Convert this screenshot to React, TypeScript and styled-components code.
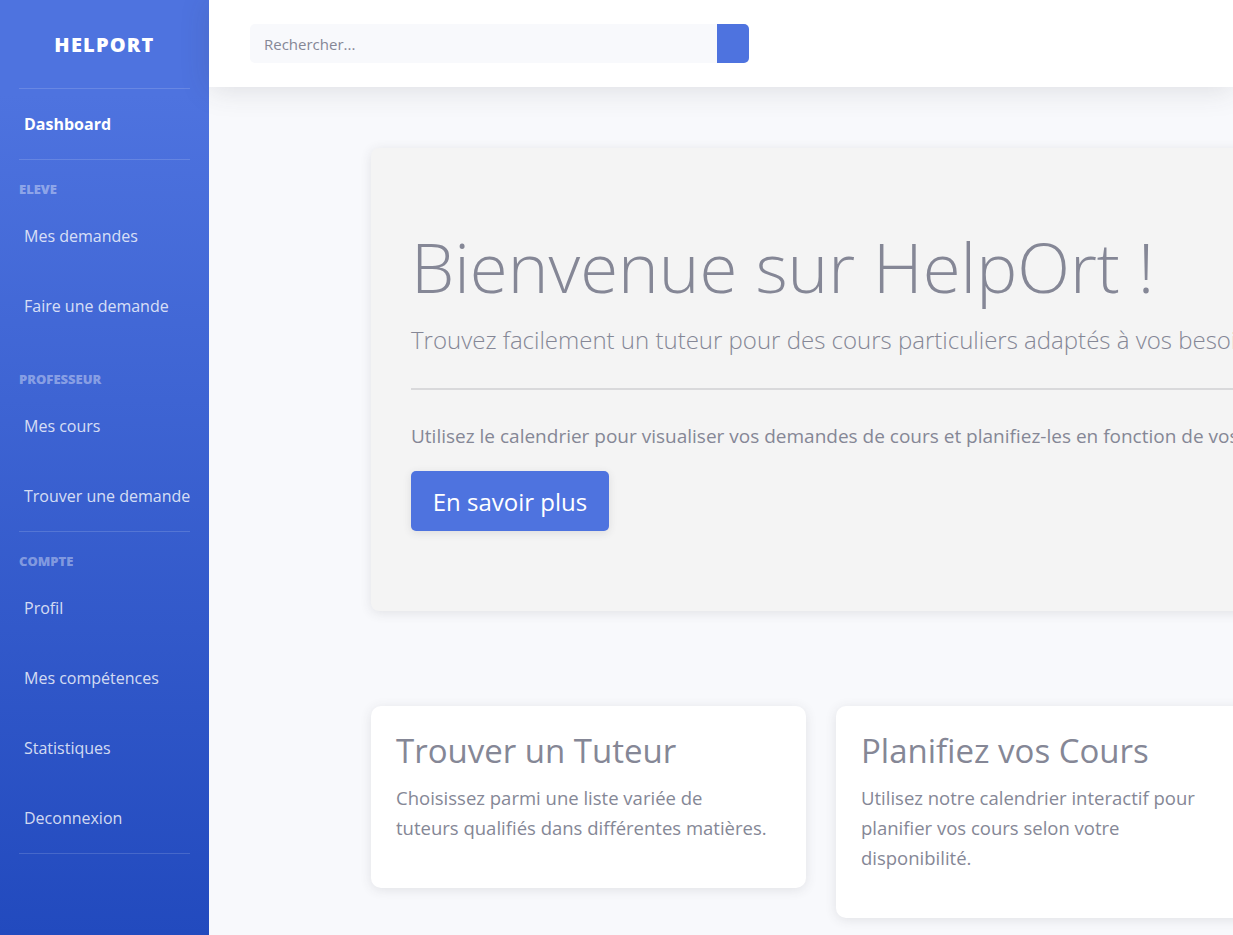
import React from "react";
import styled, { createGlobalStyle } from "styled-components";

const GlobalStyle = createGlobalStyle`
  html, body { margin: 0; padding: 0; }
  body {
    font-family: "Open Sans", "Noto Sans", "Liberation Sans", sans-serif;
    background: #f8f9fc;
    overflow: hidden;
  }
  * { box-sizing: border-box; }
`;

const Wrapper = styled.div`
  display: flex;
  width: 1233px;
  height: 935px;
  overflow: hidden;
`;

const Sidebar = styled.nav`
  width: 209px;
  flex-shrink: 0;
  display: flex;
  flex-direction: column;
  background-color: #4e73df;
  background-image: linear-gradient(180deg, #4e73df 10%, #224abe 100%);
`;

const Brand = styled.div`
  height: 88px;
  display: flex;
  align-items: center;
  justify-content: center;
  color: #fff;
  font-size: 20px;
  font-weight: 800;
  letter-spacing: 1.2px;
`;

const Divider = styled.hr`
  margin: 0 19px;
  border: 0;
  height: 1px;
  background: rgba(255, 255, 255, 0.15);
`;

const SideHeading = styled.div<{ $spaced?: boolean }>`
  padding: ${(p) => (p.$spaced ? "31px" : "22px")} 19px 5px;
  font-size: 13px;
  line-height: 14px;
  font-weight: 800;
  text-transform: uppercase;
  color: rgba(255, 255, 255, 0.4);
`;

const NavLink = styled.a<{ $active?: boolean }>`
  height: 70px;
  display: flex;
  align-items: center;
  padding: 0 24px;
  font-size: 16px;
  text-decoration: none;
  color: ${(p) => (p.$active ? "#fff" : "rgba(255, 255, 255, 0.8)")};
  font-weight: ${(p) => (p.$active ? 700 : 400)};
  white-space: nowrap;
`;

const Content = styled.div`
  flex: 1;
  min-width: 0;
  display: flex;
  flex-direction: column;
`;

const Topbar = styled.header`
  height: 87px;
  flex-shrink: 0;
  background: #fff;
  display: flex;
  align-items: center;
  padding-left: 41px;
  box-shadow: 0 2px 28px 0 rgba(58, 59, 69, 0.15);
  position: relative;
  z-index: 1;
`;

const SearchGroup = styled.form`
  display: flex;
  width: 499px;
  height: 39px;
`;

const SearchInput = styled.input`
  flex: 1;
  height: 100%;
  border: 0;
  border-radius: 5px 0 0 5px;
  background: #f8f9fc;
  padding: 0 14px;
  font-family: inherit;
  font-size: 15px;
  color: #6e707e;
  outline: none;
  &::placeholder { color: #858796; }
`;

const SearchButton = styled.button`
  width: 32px;
  height: 100%;
  border: 0;
  border-radius: 0 5px 5px 0;
  background: #4e73df;
`;

const Main = styled.main`
  flex: 1;
  overflow: hidden;
  padding: 61px 0 0 162px;
`;

const Container = styled.div`
  width: 1365px;
  display: flex;
  flex-direction: column;
`;

const Jumbotron = styled.section`
  background: #f4f4f4;
  border-radius: 8px;
  padding: 76px 40px 80px;
  box-shadow: 0 2px 12px 0 rgba(58, 59, 69, 0.12);
  color: #858796;
  display: flex;
  flex-direction: column;
`;

const Display = styled.h1`
  margin: 0;
  font-size: 69px;
  line-height: 84px;
  font-weight: 300;
  color: #858796;
  white-space: nowrap;
`;

const Lead = styled.p`
  margin: 15px 0 0;
  font-size: 24px;
  line-height: 33px;
  font-weight: 300;
  white-space: nowrap;
`;

const Rule = styled.hr`
  margin: 32px 0 0;
  border: 0;
  height: 2px;
  background: #d9d9db;
`;

const Text = styled.p`
  margin: 33px 0 0;
  font-size: 19px;
  line-height: 27px;
  white-space: nowrap;
`;

const PrimaryButton = styled.a`
  margin-top: 21px;
  align-self: flex-start;
  display: inline-flex;
  align-items: center;
  justify-content: center;
  width: 198px;
  height: 60px;
  border-radius: 5px;
  background: #4e73df;
  color: #fff;
  font-size: 24px;
  text-decoration: none;
  box-shadow: 0 2px 8px rgba(58, 59, 69, 0.12);
`;

const CardRow = styled.div`
  margin-top: 95px;
  display: flex;
  gap: 30px;
  align-items: flex-start;
`;

const Card = styled.article`
  width: 435px;
  background: #fff;
  border-radius: 10px;
  padding: 26px 25px 45px;
  box-shadow: 0 2px 12px 0 rgba(58, 59, 69, 0.12);
  color: #858796;
`;

const CardTitle = styled.h3`
  margin: 0;
  font-size: 33px;
  line-height: 38px;
  font-weight: 400;
`;

const CardText = styled.p`
  margin: 13px 0 0;
  font-size: 18.5px;
  line-height: 30px;
`;

const sections = [
  { title: "Eleve", links: ["Mes demandes", "Faire une demande"], divider: false },
  { title: "Professeur", links: ["Mes cours", "Trouver une demande"], divider: true },
  { title: "Compte", links: ["Profil", "Mes compétences", "Statistiques", "Deconnexion"], divider: true },
];

const cards = [
  {
    title: "Trouver un Tuteur",
    lines: ["Choisissez parmi une liste variée de", "tuteurs qualifiés dans différentes matières."],
  },
  {
    title: "Planifiez vos Cours",
    lines: ["Utilisez notre calendrier interactif pour", "planifier vos cours selon votre", "disponibilité."],
  },
];

export default function App() {
  return (
    <>
      <GlobalStyle />
      <Wrapper>
        <Sidebar>
          <Brand>HELPORT</Brand>
          <Divider />
          <NavLink $active>Dashboard</NavLink>
          <Divider />
          {sections.map((s, i) => {
            const prev = sections[i - 1];
            return (
              <React.Fragment key={s.title}>
                <SideHeading $spaced={i > 0 && !prev.divider}>{s.title}</SideHeading>
                {s.links.map((l) => (
                  <NavLink key={l}>{l}</NavLink>
                ))}
                {s.divider && <Divider />}
              </React.Fragment>
            );
          })}
        </Sidebar>
        <Content>
          <Topbar>
            <SearchGroup onSubmit={(e) => e.preventDefault()}>
              <SearchInput placeholder="Rechercher..." />
              <SearchButton type="submit" aria-label="Rechercher" />
            </SearchGroup>
          </Topbar>
          <Main>
            <Container>
              <Jumbotron>
                <Display>Bienvenue sur HelpOrt !</Display>
                <Lead>
                  Trouvez facilement un tuteur pour des cours particuliers adaptés à vos besoins.
                </Lead>
                <Rule />
                <Text>
                  Utilisez le calendrier pour visualiser vos demandes de cours et planifiez-les en fonction de vos disponibilités.
                </Text>
                <PrimaryButton href="#">En savoir plus</PrimaryButton>
              </Jumbotron>
              <CardRow>
                {cards.map((c) => (
                  <Card key={c.title}>
                    <CardTitle>{c.title}</CardTitle>
                    <CardText>
                      {c.lines.map((l, i) => (
                        <React.Fragment key={i}>
                          {i > 0 && <br />}
                          {l}
                        </React.Fragment>
                      ))}
                    </CardText>
                  </Card>
                ))}
              </CardRow>
            </Container>
          </Main>
        </Content>
      </Wrapper>
    </>
  );
}
